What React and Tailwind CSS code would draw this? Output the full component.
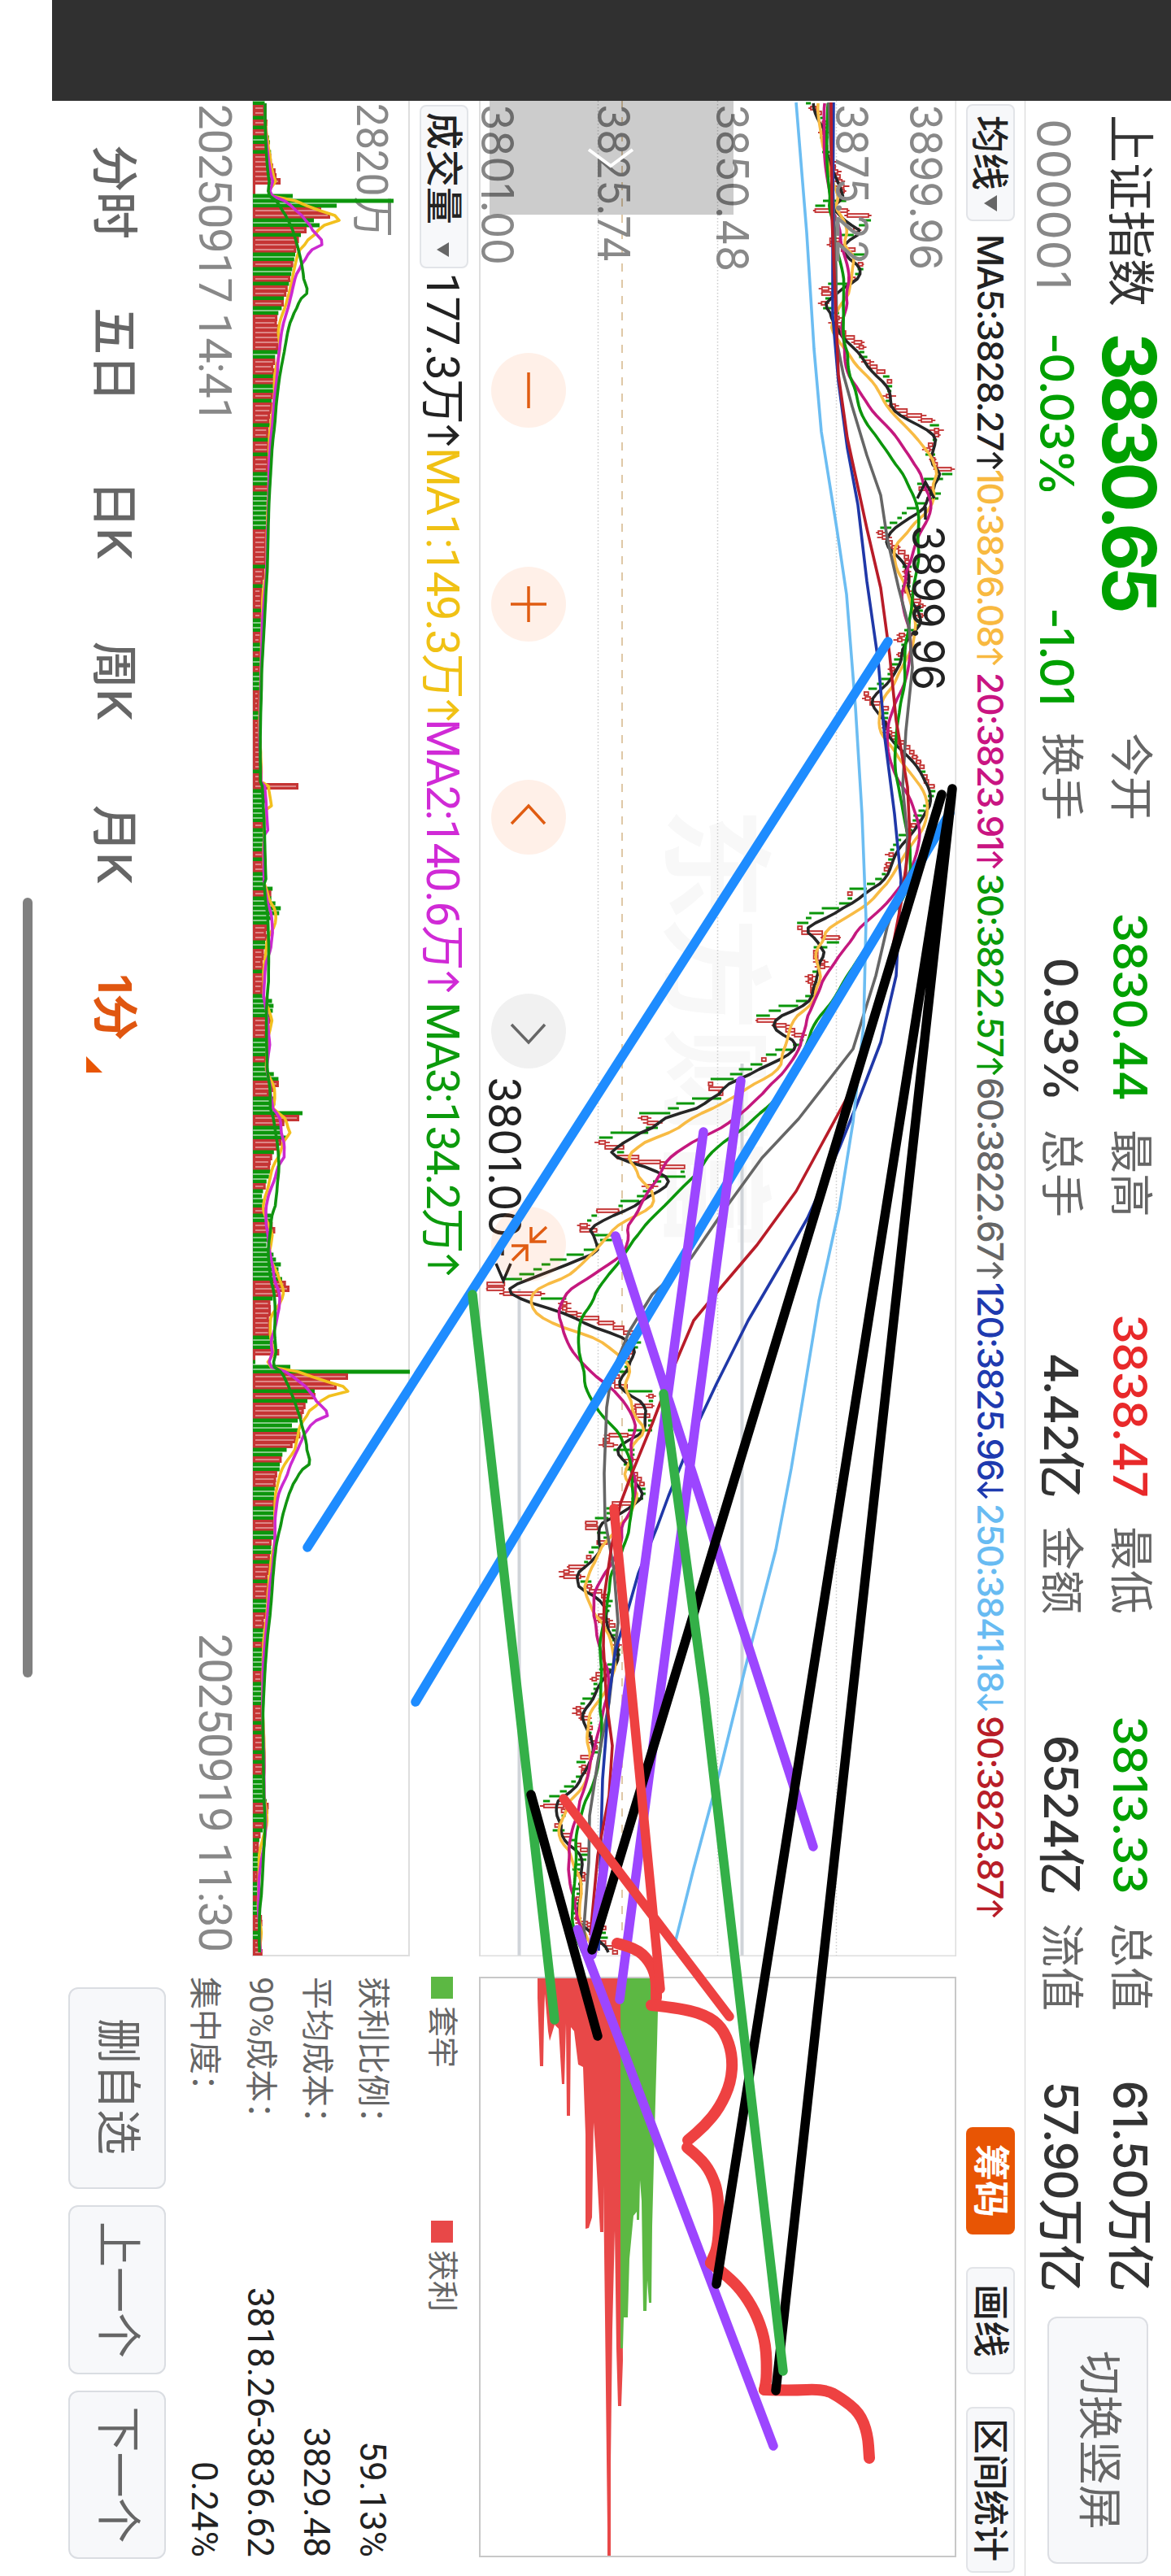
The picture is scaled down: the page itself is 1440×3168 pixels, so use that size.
import React from 'react';

// bar colours, run-length encoded: 380 one-minute bars
const RUNS =
    'G1R2G1R1G1R1G2R1G1R6R2G3R2G2R1G1R3G2R1G2R1G1R2G1R1G2R7G2R3G1R1G2R1G1R4G1R2G1R2G1R3G3R1G6' +
    'G2R7G1R3G1R4G1R1G3R2G2R1G2R1G4R4G2R10G1R3G7R1G5R1G1R2G4R1G6R3G2R4G1R4G5R4G4R1G4R3G2' +
    'G2R2G3R2G1R3G3R1G4R1G2R2G10R3G1R7G3R2G3R3G1R1G1R3G3R3G2R1G2R3G3R1G3R2G2R1G2R1G1R3G1R3G3R2' +
    'R1G3R1G5R2G5R3G1R1G1R3G1R1G1R2G6R2G2R1G1R1G1R2G4R2G3R1G3R3G2R3';

const COLORS = RUNS.match(/[RG]\d+/g).flatMap((run) => Array(Number(run.slice(1))).fill(run[0]));

const START = 124;
const STEP = 6;

// [time, level] anchors
const CLOSE = [
    [124, 995], [138, 1010], [150, 1016], [170, 1014], [190, 1020], [205, 1027], [215, 1032], [228, 1037], [240, 1037], [246, 1009],
    [252, 1000], [257, 1041], [263, 1067], [270, 1066], [276, 1053], [282, 1048], [288, 1028], [294, 1018], [300, 1037], [306, 1053],
    [312, 1060], [318, 1058], [324, 1060], [330, 1055], [340, 1046], [348, 1014], [354, 1009], [360, 1023], [368, 1009], [374, 1014],
    [380, 1032], [390, 1028], [400, 1030], [406, 1037], [412, 1048], [420, 1060], [436, 1062], [445, 1071], [455, 1087], [462, 1092],
    [468, 1096], [480, 1094], [490, 1092], [498, 1101], [504, 1117], [510, 1135], [516, 1147], [522, 1152], [530, 1154], [540, 1145],
    [546, 1140], [560, 1147], [570, 1152], [576, 1172], [582, 1156], [588, 1131], [594, 1129], [600, 1147], [606, 1154], [612, 1135],
    [618, 1124], [624, 1112], [634, 1104], [648, 1082], [655, 1085], [665, 1096], [678, 1113], [686, 1118], [695, 1115], [708, 1118],
    [720, 1113], [730, 1121], [738, 1132], [746, 1135], [755, 1130], [765, 1127], [775, 1107], [781, 1104], [790, 1113], [800, 1107],
    [810, 1101], [820, 1096], [830, 1090], [840, 1076], [846, 1065], [854, 1062], [860, 1076], [870, 1093], [880, 1087], [890, 1090],
    [900, 1096], [910, 1110], [920, 1121], [930, 1127], [940, 1135], [950, 1138], [960, 1141], [966, 1149], [975, 1144], [985, 1138],
    [995, 1130], [1005, 1127], [1015, 1118], [1025, 1107], [1035, 1099], [1050, 1096], [1065, 1090], [1075, 1082], [1085, 1065],
    [1092, 1040], [1098, 1048], [1105, 1045], [1116, 1006], [1122, 995], [1128, 989], [1134, 981], [1140, 986], [1146, 1015],
    [1152, 1034], [1158, 1012], [1164, 998], [1170, 1006], [1176, 1003], [1182, 1015], [1195, 995], [1205, 998], [1215, 1003],
    [1225, 989], [1230, 975], [1236, 956], [1242, 942], [1248, 928], [1254, 958], [1260, 967], [1266, 978], [1272, 989], [1278, 984],
    [1285, 970], [1290, 950], [1296, 939], [1302, 936], [1308, 919], [1320, 897], [1326, 871], [1332, 871], [1338, 891], [1344, 885],
    [1350, 843], [1356, 832], [1362, 818], [1368, 782], [1374, 798], [1380, 810], [1386, 790], [1392, 745], [1398, 734], [1404, 745],
    [1410, 770], [1416, 756], [1422, 790], [1428, 815], [1434, 846], [1440, 838], [1446, 807], [1452, 801], [1458, 793], [1464, 798],
    [1470, 779], [1476, 762], [1482, 759], [1488, 728], [1494, 726], [1500, 720], [1506, 711], [1512, 737], [1518, 754], [1524, 734],
    [1530, 731], [1536, 714], [1542, 692], [1548, 672], [1554, 664], [1560, 653], [1566, 636], [1572, 616], [1579, 591], [1585, 632],
    [1590, 672], [1596, 700], [1602, 695], [1608, 695], [1614, 711], [1620, 740], [1626, 756], [1632, 768], [1638, 784], [1645, 784],
    [1660, 773], [1672, 768], [1680, 773], [1690, 748], [1698, 756], [1704, 773], [1710, 807], [1716, 801], [1722, 801], [1728, 776],
    [1734, 782], [1740, 801], [1752, 801], [1758, 765], [1764, 745], [1770, 740], [1776, 756], [1782, 784], [1788, 776], [1800, 770],
    [1810, 782], [1820, 790], [1830, 793], [1835, 790], [1842, 773], [1848, 748], [1856, 751], [1866, 731], [1872, 717], [1878, 737],
    [1884, 748], [1890, 745], [1896, 731], [1902, 728], [1912, 723], [1920, 717], [1926, 695], [1932, 692], [1938, 717], [1944, 728],
    [1950, 723], [1956, 742], [1968, 751], [1974, 748], [1986, 734], [1992, 751], [1998, 756], [2010, 757], [2028, 762], [2040, 754],
    [2050, 740], [2058, 731], [2070, 734], [2080, 728], [2088, 717], [2095, 711], [2100, 709], [2106, 714], [2112, 726], [2120, 728],
    [2130, 723], [2140, 731], [2150, 734], [2160, 711], [2166, 717], [2172, 720], [2184, 706], [2196, 695], [2202, 686], [2208, 672],
    [2214, 667], [2220, 697], [2230, 692], [2244, 681], [2256, 703], [2268, 714], [2274, 723], [2286, 711], [2298, 709], [2304, 720],
    [2316, 709], [2330, 714], [2340, 709], [2355, 709], [2364, 723], [2370, 748], [2376, 742], [2382, 737], [2388, 745], [2394, 754],
    [2400, 759],
];

const VOLUME = [
    [124, 14], [160, 18], [200, 23], [214, 28], [220, 35], [226, 3], [232, 3], [238, 49], [244, 173], [250, 103], [256, 84],
    [262, 95], [268, 75], [274, 82], [280, 66], [286, 59], [296, 55], [310, 52], [340, 46], [370, 38], [390, 30], [402, 35], [440, 27],
    [480, 26], [520, 21], [560, 20], [600, 19], [640, 17], [690, 16], [720, 12], [800, 10], [850, 9], [880, 8], [940, 11], [958, 10],
    [964, 56], [970, 15], [1000, 14], [1040, 13], [1086, 15], [1092, 29], [1098, 20], [1115, 34], [1122, 30], [1128, 19], [1160, 16],
    [1180, 12], [1200, 14], [1220, 11], [1228, 24], [1240, 25], [1260, 18], [1310, 16], [1326, 32], [1333, 29], [1345, 18], [1350, 33],
    [1360, 24], [1366, 61], [1372, 57], [1380, 30], [1398, 42], [1404, 33], [1415, 24], [1430, 23], [1450, 17], [1465, 12], [1480, 12],
    [1490, 22], [1500, 20], [1512, 28], [1520, 20], [1530, 15], [1548, 31], [1565, 35], [1575, 38], [1582, 45], [1590, 30], [1600, 21],
    [1640, 22], [1659, 31], [1660, 31], [1662, 3], [1672, 3], [1678, 46], [1684, 193], [1690, 117], [1696, 95], [1702, 103],
    [1708, 76], [1714, 77], [1720, 67], [1728, 64], [1740, 60], [1750, 48], [1760, 60], [1775, 48], [1785, 35], [1800, 32],
    [1825, 28], [1850, 27], [1880, 27], [1895, 24], [1910, 22], [1930, 20], [1960, 18], [2000, 13], [2040, 12], [2100, 12],
    [2140, 15], [2200, 13], [2220, 20], [2240, 14], [2260, 8], [2300, 7], [2340, 6], [2362, 12], [2380, 7], [2400, 12],
];

const MA60 = [
    [126, 1018], [250, 1024], [330, 1027], [420, 1028], [460, 1036], [500, 1047], [560, 1065], [609, 1082], [662, 1090], [723, 1104],
    [772, 1117], [821, 1121], [899, 1113], [968, 1109], [1029, 1115], [1074, 1113], [1140, 1090], [1200, 1076], [1290, 1048],
    [1376, 981], [1424, 936], [1486, 891], [1547, 849], [1592, 801], [1637, 773], [1690, 751], [1731, 745], [1812, 742], [1869, 743],
    [1931, 754], [1996, 759], [2094, 748], [2167, 734], [2233, 724], [2290, 723], [2371, 717], [2398, 720],
];
const MA90 = [
    [126, 1021], [265, 1022], [388, 1027], [461, 1030], [539, 1041], [650, 1065], [723, 1082], [805, 1093], [886, 1101], [968, 1115],
    [1029, 1118], [1111, 1107], [1200, 1090], [1294, 1062], [1351, 1040], [1408, 1009], [1465, 978], [1531, 930], [1584, 885],
    [1624, 852], [1678, 829], [1751, 801], [1812, 776], [1849, 762], [1902, 751], [1963, 742], [2024, 741], [2094, 745], [2147, 752],
    [2208, 748], [2282, 734], [2380, 725],
];
const MA120 = [
    [126, 1024], [286, 1023], [388, 1023], [469, 1030], [551, 1041], [621, 1054], [715, 1065], [813, 1079], [907, 1087], [1001, 1099],
    [1082, 1107], [1200, 1101], [1282, 1082], [1355, 1054], [1412, 1031], [1498, 992], [1547, 964], [1624, 919], [1702, 880],
    [1751, 857], [1840, 821], [1878, 807], [1935, 784], [1984, 770], [2029, 756], [2086, 748], [2188, 740], [2298, 737], [2399, 735],
];
const MA250 = [
    [126, 978], [286, 991], [429, 1000], [531, 1009], [650, 1028], [731, 1040], [870, 1051], [1001, 1059], [1131, 1064], [1261, 1061],
    [1380, 1048], [1486, 1031], [1600, 1006], [1722, 986], [1806, 972], [1906, 953], [2037, 919], [2175, 885], [2298, 852], [2398, 827],
];

// chip distribution outline, [level, length]
const CHIPS_RED = [
    [660, 0], [660, 26], [663, 110], [667, 110], [668, 52], [669, 21], [673, 67], [675, 79], [681, 59], [686, 64], [690, 132],
    [693, 132], [695, 57], [696, 171], [700, 171], [701, 62], [705, 67], [710, 108], [716, 111], [719, 194], [719, 310], [723, 309],
    [727, 296], [729, 179], [732, 222], [737, 314], [741, 314], [741, 256], [743, 419], [746, 679], [746, 713], [750, 713], [750, 597],
    [752, 434], [755, 312], [757, 457], [759, 528], [763, 528], [765, 472], [762, 0],
];
const CHIPS_GREEN = [
    [762, 0], [762, 457], [765, 457], [766, 419], [771, 419], [773, 347], [778, 294], [782, 289], [782, 299], [785, 299], [786, 250],
    [788, 276], [790, 411], [794, 411], [795, 373], [797, 401], [800, 401], [801, 307], [804, 189], [807, 82], [808.5, 21], [808.5, 0],
];

const noise = (i) => {
    const v = Math.sin(i * 127.1 + 11.7) * 43758.5453;
    return v - Math.floor(v);
};

function sample(points, t) {
    if (t <= points[0][0]) return points[0][1];
    for (let i = 1; i < points.length; i++) {
        const [t1, v1] = points[i];
        if (t <= t1) {
            const [t0, v0] = points[i - 1];
            return v0 + ((v1 - v0) * (t - t0)) / (t1 - t0);
        }
    }
    return points[points.length - 1][1];
}

const average = (values, n, before) =>
    values.map((_, i) => {
        let sum = 0;
        for (let k = 0; k < n; k++) sum += i - k >= 0 ? values[i - k] : before;
        return sum / n;
    });

const closes = COLORS.map((_, i) => sample(CLOSE, START + i * STEP + 1));
const volumes = COLORS.map((_, i) => {
    const v = sample(VOLUME, START + i * STEP);
    return v > 40 || v < 5 ? v : v * (0.92 + noise(i) * 0.16);
});

const PRICE_TOP = 1175;
const toPath = (pts) => 'M' + pts.map(([x, y]) => `${x.toFixed(1)} ${y.toFixed(1)}`).join('L');
const longLine = (pts) => toPath(pts.map(([t, v]) => [t - START, PRICE_TOP - v]));
const priceLine = (n, before) => toPath(average(closes, n, before).map((v, i) => [i * STEP + 3, PRICE_TOP - v]));
const volumeLine = (n) => toPath(average(volumes, n, 15).map((v, i) => [i * STEP + 3, 193 - v]));

function smooth(pts) {
    let d = `M${pts[0][0]} ${pts[0][1]}`;
    for (let i = 1; i < pts.length - 1; i++) {
        const mx = (pts[i][0] + pts[i + 1][0]) / 2;
        const my = (pts[i][1] + pts[i + 1][1]) / 2;
        d += `Q${pts[i][0]} ${pts[i][1]} ${mx} ${my}`;
    }
    const last = pts[pts.length - 1];
    return d + `L${last[0]} ${last[1]}`;
}

function Header() {
    const stats = [
        ['今开', '3830.44', 'text-[#00a000]', '换手', '0.93%'],
        ['最高', '3838.47', 'text-[#e8292a]', '总手', '4.42亿'],
        ['最低', '3813.33', 'text-[#00a000] tracking-[-0.3px]', '金额', '6524亿'],
        ['总值', '61.50万亿', 'text-[#333]', '流值', '57.90万亿'],
    ];
    return (
        <header className="flex h-[180px] border-b border-[#d4d4d4] pt-[7px]">
            <div className="w-[285px] pl-[17px]">
                <div className="flex h-[85px] items-center text-[59px] text-[#333]">上证指数</div>
                <div className="flex h-[103px] items-center pl-[5px] text-[58px] tracking-[0.8px] text-[#888]">000001</div>
            </div>
            <div className="w-[492px] text-[#00a000]">
                <div className="flex h-[88px] items-center text-[91px] leading-[1.1] font-bold tracking-[-5.8px]">3830.65</div>
                <div className="flex h-[89px] items-center text-[58px] font-medium tracking-[-1.8px]">
                    <span className="w-[338px]">-0.03%</span>
                    <span>-1.01</span>
                </div>
            </div>
            <div className="flex gap-9">
                {stats.map(([a, av, tone, b, bv]) => (
                    <div key={a} className="w-[452px] text-[58px] font-medium text-[#333]">
                        <div className="flex h-[85px] items-center justify-between">
                            <span className="text-[54px] font-normal text-[#666]">{a}</span>
                            <span className={tone.includes('tracking') ? tone : `tracking-[-1.2px] ${tone}`}>{av}</span>
                        </div>
                        <div className="flex h-[85px] items-center justify-between">
                            <span className="text-[54px] font-normal text-[#666]">{b}</span>
                            <span className="tracking-[-1.6px]">{bv}</span>
                        </div>
                    </div>
                ))}
            </div>
            <button className="mt-[21px] ml-8 flex h-[124px] w-[304px] items-center justify-center rounded-xl border-2 border-[#dcdee3] bg-[#f7f8fa] pb-[6px] text-[55px] text-[#666]">
                切换竖屏
            </button>
        </header>
    );
}

function Arrow({ down, className }) {
    return (
        <svg className={`inline-block shrink-0 ${className}`} viewBox="0 0 22 34" fill="none" stroke="currentColor" strokeWidth="3.600">
            <path d={down ? 'M11 0V31M1 21L11 31.500L21 21' : 'M11 34V3M1 13L11 2.500L21 13'} />
        </svg>
    );
}

function AverageRow() {
    const items = [
        ['MA5:3828.27', 'w-[289px] text-[#222]'],
        ['10:3826.08', 'w-[250px] text-[#f8b940]'],
        ['20:3823.91', 'w-[247px] text-[#c91482]'],
        ['30:3822.57', 'w-[251px] text-[#0a9a0a]'],
        ['60:3822.67', 'w-[252px] text-[#666]'],
        ['120:3825.96', 'w-[272px] text-[#1e3aaf]', true],
        ['250:3841.18', 'w-[261px] text-[#68bbf2]', true],
        ['90:3823.87', 'w-[506px] text-[#b81d28]'],
    ];
    return (
        <div className="flex h-[84px] items-center pl-1">
            <div className="mr-[16px] flex h-[60px] w-[144px] items-center rounded-lg border-2 border-[#e2e4e8] bg-[#f7f8fa] pl-3 text-[46px] font-medium text-[#222]">
                均线
                <i className="ml-[6px] border-x-[10px] border-t-[16px] border-x-transparent border-t-[#666]" />
            </div>
            {items.map(([text, cls, down]) => (
                <span key={text} className={`flex shrink-0 items-center gap-[2px] text-[44px] font-medium tracking-[-1.9px] whitespace-nowrap ${cls}`}>
                    {text}
                    <Arrow down={down} className="h-[33px] w-[21px]" />
                </span>
            ))}
            <button className="h-[60px] w-[132px] shrink-0 rounded-lg bg-[#e85504] text-[45px] leading-[56px] font-bold text-white">筹码</button>
            <button className="ml-10 h-[60px] w-[132px] shrink-0 rounded-lg border-2 border-[#e2e4e8] bg-[#f7f8fa] text-[45px] leading-[52px] font-medium text-[#222]">画线</button>
            <button className="ml-10 h-[60px] w-[204px] shrink-0 rounded-lg border-2 border-[#e2e4e8] bg-[#f7f8fa] text-[44px] leading-[52px] font-medium text-[#222]">区间统计</button>
        </div>
    );
}

function Candle({ i }) {
    const up = COLORS[i] === 'R';
    const a = PRICE_TOP - (i ? closes[i - 1] : closes[0] - 6);
    const b = PRICE_TOP - closes[i];
    const top = Math.min(a, b);
    const size = Math.max(Math.abs(a - b), 5);
    const x = i * STEP + 3;
    const wick = noise(i + 900) > 0.5 ? noise(i + 300) * 7 : 0;
    return up ? (
        <g stroke="#c23232" strokeWidth="1.8" fill="#f8dcdc">
            {wick > 0 && <path d={`M${x} ${top - wick}V${top + size + wick}`} />}
            <rect x={x - 2} y={top} width="4" height={size} />
        </g>
    ) : (
        <rect x={x - 1.5} y={top - wick / 2} width="3" height={size + wick} fill="#0a960a" />
    );
}

function PriceChart() {
    const labels = [
        ['3899.96', 57, 204],
        ['3875.22', 148, 197],
        ['3850.48', 295, 206],
        ['3825.74', 441, 195],
        ['3801.00', 584, 198],
    ];
    return (
        <svg className="block" width="2282" height="587" viewBox="0 0 2282 587" fill="none">
            <text x="869" y="346" fontSize="138" fontWeight="700" fill="#f8f8f8" textLength="545" fontFamily="Noto Sans CJK SC">东方财富</text>
            <path d="M0 147.500H2282M0 293.500H2282M0 440.500H2282" stroke="#ccc" strokeWidth="1.500" strokeDasharray="1.500 2.500" />
            <path d="M0 411H2282" stroke="#dfc8a6" strokeWidth="2" strokeDasharray="10 10" />
            <path d="M1184 263.500H2282M1461 537.500H2282" stroke="#d0d4d9" strokeWidth="4" />
            {COLORS.map((_, i) => <Candle key={i} i={i} />)}
            <g strokeWidth="3.600" strokeLinejoin="round">
                <path d={priceLine(5, 1000)} stroke="#262626" />
                <path d={priceLine(10, 1006)} stroke="#f8bb44" />
                <path d={priceLine(20, 1014)} stroke="#c4187e" />
                <path d={priceLine(30, 1018)} stroke="#0c960c" />
                <path d={longLine(MA60)} stroke="#666" />
                <path d={longLine(MA120)} stroke="#2038a8" />
                <path d={longLine(MA250)} stroke="#6cbdf2" />
                <path d={longLine(MA90)} stroke="#b81c28" />
            </g>
            <g fill="#888" fontSize="55" fontFamily="Inter">
                {labels.map(([text, y, w]) => (
                    <text key={text} x="4" y={y} textLength={w} lengthAdjust="spacingAndGlyphs">{text}</text>
                ))}
            </g>
            <g fill="#222" fontSize="55" fontFamily="Inter">
                <text x="522" y="54" textLength="203" lengthAdjust="spacingAndGlyphs">3899.96</text>
                <text x="1200" y="575" textLength="198" lengthAdjust="spacingAndGlyphs">3801.00</text>
            </g>
            <path d="M489 27L469 38L489 48M499 38H515M1404 558H1420M1430 548L1451 557L1430 566" stroke="#222" strokeWidth="3.500" />
            <path d="M0 .5H2281.500V586H0" stroke="#dedede" strokeWidth="2" />
        </svg>
    );
}

function ChipChart() {
    const outline = (pts) => toPath(pts.map(([v, len]) => [len, PRICE_TOP - v])) + 'Z';
    return (
        <svg className="block" width="714" height="587" viewBox="0 0 714 587">
            <path d={outline(CHIPS_RED)} fill="#e84848" />
            <path d={outline(CHIPS_GREEN)} fill="#5cb843" />
            <path d="M1 1H713V586H1Z" fill="none" stroke="#c8c8c8" strokeWidth="2" />
        </svg>
    );
}

const ICONS = {
    minus: 'M24 46H68',
    plus: 'M24 46H68M46 24V68',
    left: 'M54 26L32 46L54 67',
    right: 'M38 26L60 46L38 67',
    shrink: 'M25 24L43 43M25 43H43V24M66 66L48 48M48 67V48H67',
};

function Controls() {
    return (
        <div className="absolute top-[480px] left-[310px] flex gap-[170.5px]">
            {Object.entries(ICONS).map(([name, d]) => (
                <button key={name} className={`size-[92px] rounded-full ${name === 'right' ? 'bg-[#f1f1f1] text-[#666]' : 'bg-[#ff6a1a]/10 text-[#e05c12]'}`}>
                    <svg width="92" height="92" fill="none" stroke="currentColor" strokeWidth="3.500">
                        <path d={d} />
                    </svg>
                </button>
            ))}
        </div>
    );
}

function VolumeRow() {
    const items = [
        ['177.3万', 'w-[215px] text-[#222]'],
        ['MA1:149.3万', 'w-[334px] text-[#f0c114]'],
        ['MA2:140.6万', 'w-[348px] text-[#d02ad6]'],
        ['MA3:134.2万', 'text-[#0c9a0c]'],
    ];
    return (
        <div className="flex h-[85px] items-center pl-[5px] font-['Roboto','Noto_Sans_CJK_SC',sans-serif] text-[56px] whitespace-nowrap">
            <div className="mr-[5px] flex h-[60px] w-[201px] items-center rounded-lg border-2 border-[#e2e4e8] bg-[#f7f8fa] pl-[7px] text-[46px] font-medium text-[#222]">
                成交量
                <i className="mt-1 ml-[22px] border-x-[9px] border-t-[15px] border-x-transparent border-t-[#666]" />
            </div>
            {items.map(([text, cls]) => (
                <span key={text} className={`flex shrink-0 items-center gap-[3px] pt-[5px] tracking-[-2px] ${cls}`}>
                    {text}
                    <Arrow className="mb-1 h-[43px] w-[25px]" />
                </span>
            ))}
        </div>
    );
}

function VolumeChart() {
    return (
        <svg className="block" width="2282" height="194" viewBox="0 0 2282 194" fill="none">
            <text x="3" y="65" fontSize="54" fill="#888" textLength="165" lengthAdjust="spacingAndGlyphs" fontFamily="Roboto, 'Noto Sans CJK SC'">2820万</text>
            <path d="M0 1H2281V193H0" stroke="#dedede" strokeWidth="2" />
            {volumes.map((v, i) => {
                const x = i * STEP;
                return COLORS[i] === 'R' ? (
                    <g key={i}>
                        <rect x={x - 1} y={193 - v} width="8" height={v} fill="#c53434" />
                        {v > 6 && <path d={`M${x + 3} ${196 - v}V190`} stroke="#f5d8d8" strokeWidth="1" />}
                    </g>
                ) : (
                    <rect key={i} x={x + 0.5} y={193 - v} width="5" height={v} fill="#0c960c" />
                );
            })}
            <g strokeWidth="3.600" strokeLinejoin="round">
                <path d={volumeLine(5)} stroke="#f2c01e" />
                <path d={volumeLine(10)} stroke="#cc2ad0" />
                <path d={volumeLine(20)} stroke="#119411" />
            </g>
        </svg>
    );
}

function ChipStats() {
    const rows = [
        ['获利比例：', '59.13%'],
        ['平均成本：', '3829.48'],
        ['90%成本：', '3818.26-3836.62'],
        ['集中度：', '0.24%'],
    ];
    return (
        <div className="font-['Roboto','Noto_Sans_CJK_SC',sans-serif] text-[38px] text-[#666]">
            <div className="flex h-[90px] items-center">
                <div className="flex w-[300px] items-center gap-[9px]">
                    <i className="size-[27px] bg-[#5cb843]" />套牢
                </div>
                <div className="flex items-center gap-[9px]">
                    <i className="size-[27px] bg-[#e84848]" />获利
                </div>
            </div>
            <div className="w-[714px] pt-[6px]">
                {rows.map(([label, value]) => (
                    <div key={label} className="flex h-[69px] items-center justify-between">
                        <span className="text-[40px]">{label}</span>
                        <span className="text-[44px] text-[#222]">{value}</span>
                    </div>
                ))}
            </div>
        </div>
    );
}

function Footer() {
    return (
        <div className="flex h-[120px] items-center">
            <nav className="flex w-[2320px] shrink-0 items-center pt-[5px] pl-[54px] text-[58px] font-medium text-[#666]">
                <span className="w-[200px]">分时</span>
                <span className="w-[213px]">五日</span>
                <span className="w-[198px]">日K</span>
                <span className="w-[201px]">周K</span>
                <span className="w-[208px]">月K</span>
                <span className="relative text-[57px] font-bold text-[#e05610]">
                    1分
                    <i className="absolute -right-[39px] -bottom-[7px] border-b-[20px] border-l-[20px] border-b-[#e85504] border-l-transparent" />
                </span>
            </nav>
            <div className="flex gap-5 text-[56px] text-[#666]">
                <button className="h-[120px] w-[248px] rounded-xl border-2 border-[#dadde2] bg-[#f7f8fa] pr-3 pb-1 pl-2">删自选</button>
                <button className="h-[120px] w-[208px] rounded-xl border-2 border-[#dadde2] bg-[#f7f8fa] pb-1">上一个</button>
                <button className="h-[120px] w-[207px] rounded-xl border-2 border-[#dadde2] bg-[#f7f8fa] pb-1">下一个</button>
            </div>
        </div>
    );
}

// hand-drawn strokes over the whole screen
function Drawings() {
    const freehand = [
        [[759, 2390], [782, 2396], [798, 2411], [807, 2431], [807, 2457]],
        [[801, 2466], [841, 2470], [874, 2481], [891, 2498], [901, 2528], [899, 2561], [885, 2592], [866, 2615], [846, 2632]],
        [[845, 2641], [860, 2653], [874, 2671], [884, 2699], [884, 2760], [874, 2783]],
        [[874, 2783], [897, 2801], [916, 2822], [932, 2850], [942, 2883], [943, 2924], [940, 2939]],
        [[940, 2939], [970, 2940], [1014, 2938], [1034, 2949], [1057, 2967], [1067, 2993], [1069, 3023]],
    ];
    return (
        <svg className="pointer-events-none absolute top-0 left-0" width="3168" height="1440" fill="none">
            <g transform="translate(0 1440) rotate(-90)" strokeWidth="11.500" strokeLinecap="round">
                <path d="M1092 789L378 1903M1168 1000L511 2093" stroke="#1e8cff" />
                <path d="M911 1329L762 2459M865 1392L728 2404M757 1520L1000 2271M710 2373L951 3008" stroke="#9c46ff" />
                <g stroke="#ee4141" strokeWidth="14" strokeLinejoin="round">
                    {freehand.map((pts) => <path key={pts[0].join()} d={smooth(pts)} />)}
                </g>
                <path d="M581 1592L682 2484" stroke="#34b048" />
                <path d="M1158 977L728 2398M1171 970L881 2809M1171 970L954 2940M653 2207L735 2504" stroke="#000" />
                <path d="M816 1714L867 2090M867 2092L963 2916" stroke="#34b048" />
                <path d="M755 1855L812 2446M693 2212L897 2480" stroke="#ee4141" />
            </g>
        </svg>
    );
}

export default function App() {
    return (
        <div className="h-[3168px] w-[1440px] overflow-hidden bg-white">
            <div className="relative flex h-[1440px] w-[3168px] origin-top-left translate-x-[1440px] rotate-90 bg-white font-['Inter','Noto_Sans_CJK_SC',sans-serif] leading-none">
                <div className="h-[1376px] w-[124px] shrink-0 bg-[#303030]" />
                <main className="w-[3044px] shrink-0">
                    <Header />
                    <AverageRow />
                    <div className="relative flex gap-[25px]">
                        <PriceChart />
                        <ChipChart />
                        <div className="absolute top-[274px] left-0 h-[300px] w-[140px] bg-black/20">
                            <svg width="140" height="300" fill="none" stroke="#fff" strokeWidth="4">
                                <path d="M60 178L80 151L60 124" />
                            </svg>
                        </div>
                        <Controls />
                    </div>
                    <div className="flex h-[385px] gap-[25px]">
                        <div>
                            <VolumeRow />
                            <VolumeChart />
                            <div className="flex h-[106px] justify-between pt-[21px] pr-[6px] pl-1 font-['Roboto','Noto_Sans_CJK_SC',sans-serif] text-[56px] leading-[50px] tracking-[-1px] text-[#888]">
                                <span>20250917 14:41</span>
                                <span>20250919 11:30</span>
                            </div>
                        </div>
                        <ChipStats />
                    </div>
                    <Footer />
                    <div className="mt-11 ml-[980px] h-3 w-[959px] rounded-full bg-[#808080]" />
                </main>
                <Drawings />
            </div>
        </div>
    );
}
